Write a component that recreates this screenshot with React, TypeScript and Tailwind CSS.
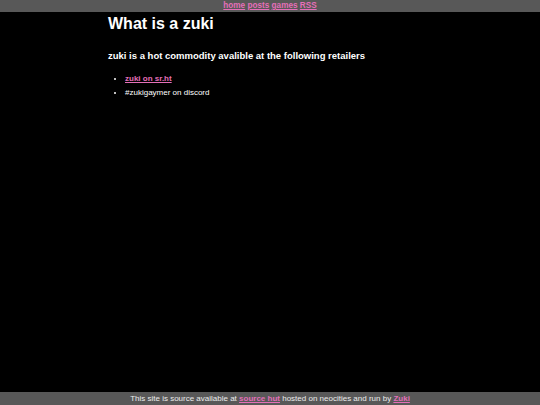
import React from 'react';

export default function App() {
  const link = "text-[#e46fb9] underline font-bold";
  return (
    <div className="h-[405px] w-full bg-black flex flex-col text-white font-['Liberation_Sans',Arial,sans-serif]">
      <nav className="h-[12px] bg-[#585858] text-center text-[8.2px] leading-[12px]">
        <a href="#" className={link}>home</a>{' '}
        <a href="#" className={link}>posts</a>{' '}
        <a href="#" className={link}>games</a>{' '}
        <a href="#" className={link}>RSS</a>
      </nav>

      <main className="flex-1 ml-[20%] w-[60%]">
        <h1 className="mt-[3px] text-[16px] leading-[18px] font-bold">What is a zuki</h1>
        <h3 className="mt-[17px] text-[9.5px] leading-[11px] font-bold">
          zuki is a hot commodity avalible at the following retailers
        </h3>
        <ul className="mt-[13px] pl-[17px] list-disc text-[8px] leading-[9px] flex flex-col gap-[5px]">
          <li><a href="#" className={link}>zuki on sr.ht</a></li>
          <li>#zukigaymer on discord</li>
        </ul>
      </main>

      <footer className="h-[13px] bg-[#585858] text-center text-[8px] leading-[13px] text-[#ececec]">
        This site is source available at{' '}
        <a href="#" className={link}>source hut</a> hosted on neocities and run by{' '}
        <a href="#" className={link}>Zuki</a>
      </footer>
    </div>
  );
}
